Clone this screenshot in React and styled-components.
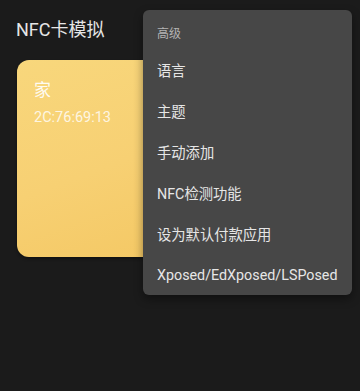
import React from 'react'
import styled, { createGlobalStyle } from 'styled-components'

const GlobalStyle = createGlobalStyle`
  html, body {
    margin: 0;
    padding: 0;
    background: #1b1b1b;
  }
  body {
    font-family: Roboto, "Noto Sans CJK SC", sans-serif;
  }
`

const menuItems = ['语言', '主题', '手动添加', 'NFC检测功能', '设为默认付款应用', 'Xposed/EdXposed/LSPosed']

function App() {
  return (
    <>
      <GlobalStyle />
      <Screen>
        <TopBar>
          <Title>NFC卡模拟</Title>
        </TopBar>
        <CardGrid>
          <Card>
            <CardName>家</CardName>
            <CardId>2C:76:69:13</CardId>
          </Card>
        </CardGrid>
        <Menu>
          <MenuHeader>高级</MenuHeader>
          <MenuList>
            {menuItems.map((item) => (
              <MenuItem key={item}>{item}</MenuItem>
            ))}
          </MenuList>
        </Menu>
      </Screen>
    </>
  )
}

const Screen = styled.div`
  position: relative;
  width: 360px;
  height: 391px;
  background: #1b1b1b;
  overflow: hidden;
`
const TopBar = styled.div`
  display: flex;
  align-items: center;
  height: 60px;
  padding: 0 16px;
  box-sizing: border-box;
`
const Title = styled.div`
  font-size: 18px;
  line-height: 24px;
  color: #e6e6e6;
  margin-top: -1px;
`
const CardGrid = styled.div`
  display: grid;
  grid-template-columns: 1fr 1fr;
  gap: 12px;
  padding: 0 16px 0 17px;
`
const Card = styled.div`
  height: 197px;
  border-radius: 12px;
  background: linear-gradient(160deg, #f8d77c 0%, #f7d073 55%, #f4c864 100%);
  box-shadow: 0 2px 3px rgba(0, 0, 0, 0.35);
  padding: 19px 17px;
  box-sizing: border-box;
  display: flex;
  flex-direction: column;
  gap: 8px;
`
const CardName = styled.div`
  font-size: 17px;
  line-height: 22px;
  color: rgba(255, 255, 255, 0.92);
`
const CardId = styled.div`
  font-size: 14.5px;
  line-height: 18px;
  color: rgba(255, 255, 255, 0.8);
`
const Menu = styled.div`
  position: absolute;
  left: 143px;
  top: 10px;
  width: 209px;
  background: #474747;
  border-radius: 6px;
  box-shadow: 0 4px 10px rgba(0, 0, 0, 0.4);
  padding-top: 8px;
  display: flex;
  flex-direction: column;
`
const MenuHeader = styled.div`
  height: 28px;
  display: flex;
  align-items: center;
  padding: 0 14px;
  font-size: 12px;
  color: #b4b4b4;
`
const MenuList = styled.div`
  display: flex;
  flex-direction: column;
  margin-top: 3px;
`
const MenuItem = styled.div`
  height: 41px;
  display: flex;
  align-items: center;
  padding: 0 14px;
  font-size: 14.3px;
  color: #e6e6e6;
  white-space: nowrap;
`

export default App
